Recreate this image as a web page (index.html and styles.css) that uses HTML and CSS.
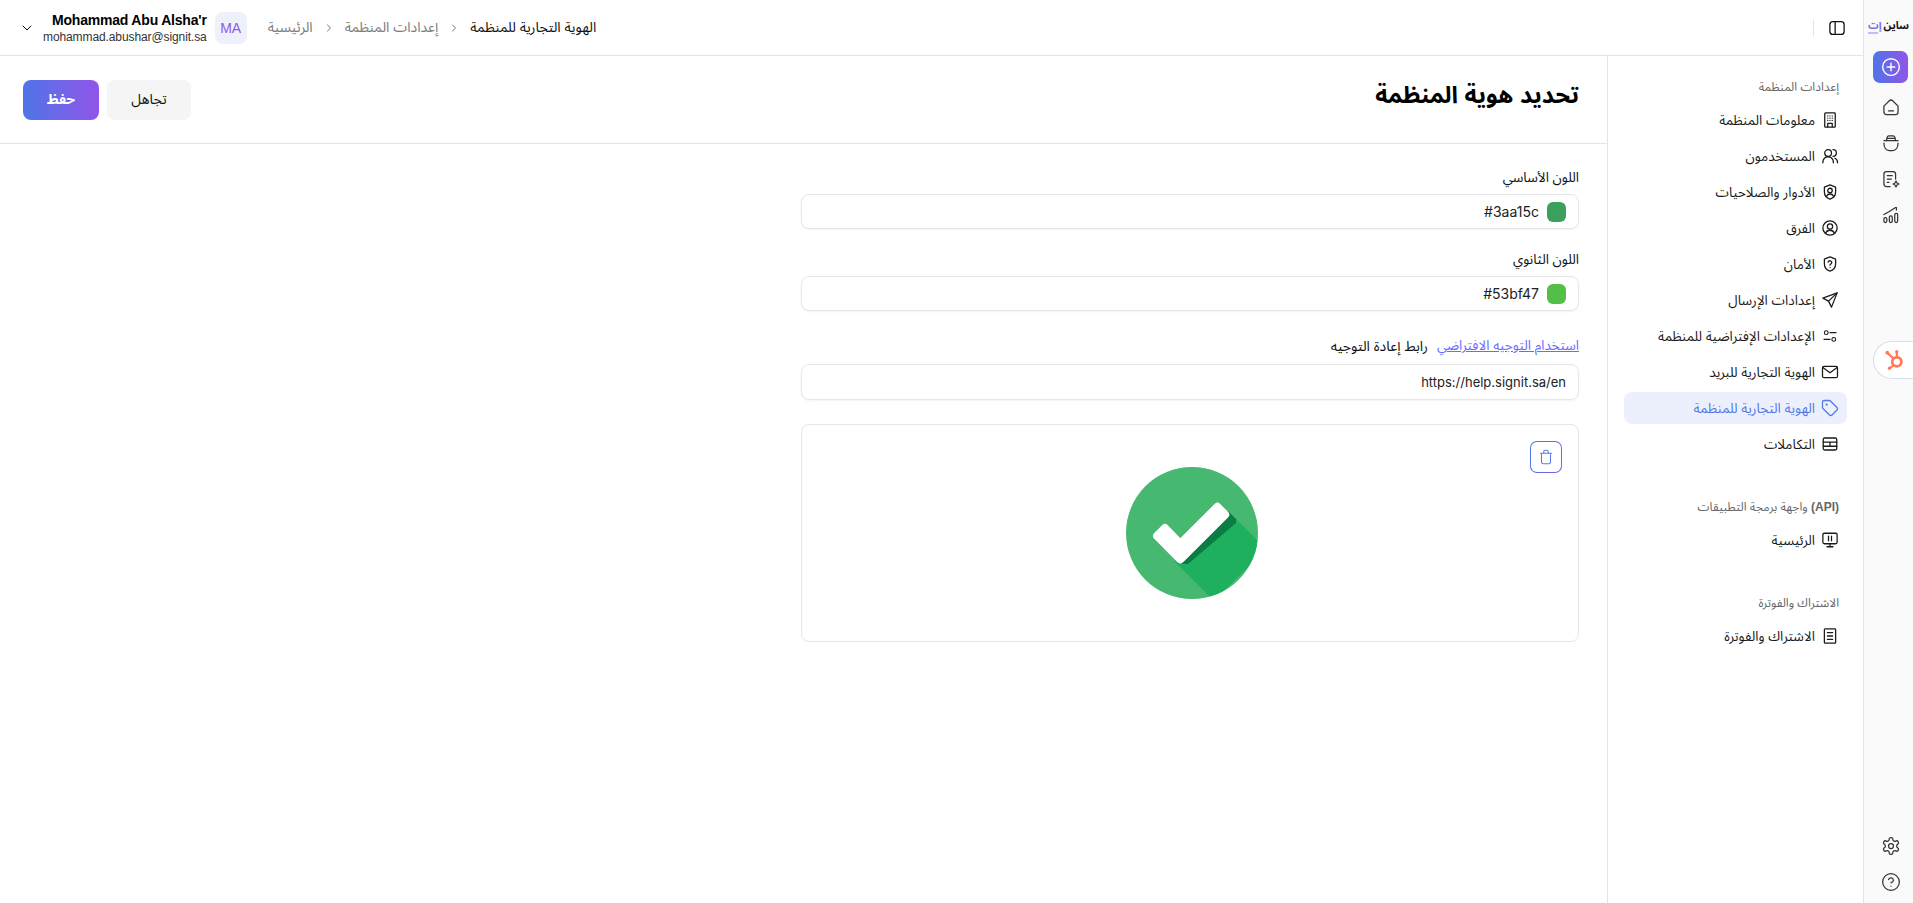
FILE: index.html
```html
<!DOCTYPE html>
<html lang="ar" dir="rtl">
<head>
    <meta charset="UTF-8">
    <meta name="viewport" content="width=device-width, initial-scale=1.0">
    <title>تحديد هوية المنظمة</title>
    <link rel="stylesheet" href="styles.css">
</head>
<body>

    <!-- الشريط الجانبي الضيق -->
    <aside class="rail">
        <div class="logo"><span>ساين</span> <span class="logo-accent">إت</span></div>
        <button class="rail-add">
            <svg class="icon icon-add" viewBox="0 0 24 24"><circle cx="12" cy="12" r="10"/><path d="M12 7.5v9M7.5 12h9"/></svg>
        </button>
        <nav class="rail-links">
            <a class="rail-link"><svg class="icon" viewBox="0 0 24 24"><path d="M3.5 11 10 4.500a3 3 0 0 1 4 0l6.500 6.500v7a3 3 0 0 1-3 3h-11a3 3 0 0 1-3-3z"/><path d="M9 16.500h6"/></svg></a>
            <a class="rail-link"><svg class="icon" viewBox="0 0 24 24"><path d="M6.500 9l1-4A2 2 0 0 1 9.500 3.500h5a2 2 0 0 1 2 1.500l1 4"/><path d="M3.500 9h17"/><path d="M3.500 12c0 5 2.500 9 6.500 9h4c4 0 6.500-4 6.500-9"/><path d="M7.500 6.500h9"/></svg></a>
            <a class="rail-link"><svg class="icon" viewBox="0 0 24 24"><path d="M11 21H6.500a3 3 0 0 1-3-3V6a3 3 0 0 1 3-3h8a3 3 0 0 1 3 3v6"/><path d="M7.500 8h6M7.500 12h5M7.500 16h2"/><path d="M18 14.500l1.200 2.300 2.300 1.200-2.300 1.200-1.200 2.300-1.200-2.300-2.300-1.200 2.300-1.200z"/></svg></a>
            <a class="rail-link"><svg class="icon" viewBox="0 0 24 24"><rect x="3.500" y="15" width="3.500" height="6" rx="1.700"/><rect x="10" y="13" width="3.500" height="8" rx="1.700"/><rect x="16.500" y="10" width="3.500" height="11" rx="1.700"/><path d="M3.500 11.500l6-3.500 8-5"/><path d="M18.500 3v3"/></svg></a>
        </nav>
        <div class="rail-bottom">
            <a class="rail-link"><svg class="icon" viewBox="0 0 24 24"><path d="M12.22 2h-.44a2 2 0 0 0-2 2v.18a2 2 0 0 1-1 1.73l-.43.25a2 2 0 0 1-2 0l-.15-.08a2 2 0 0 0-2.73.73l-.22.38a2 2 0 0 0 .73 2.73l.15.1a2 2 0 0 1 1 1.72v.51a2 2 0 0 1-1 1.74l-.15.09a2 2 0 0 0-.73 2.73l.22.38a2 2 0 0 0 2.73.73l.15-.08a2 2 0 0 1 2 0l.43.25a2 2 0 0 1 1 1.73V20a2 2 0 0 0 2 2h.44a2 2 0 0 0 2-2v-.18a2 2 0 0 1 1-1.73l.43-.25a2 2 0 0 1 2 0l.15.08a2 2 0 0 0 2.73-.73l.22-.39a2 2 0 0 0-.73-2.73l-.15-.08a2 2 0 0 1-1-1.74v-.5a2 2 0 0 1 1-1.74l.15-.09a2 2 0 0 0 .73-2.73l-.22-.38a2 2 0 0 0-2.73-.73l-.15.08a2 2 0 0 1-2 0l-.43-.25a2 2 0 0 1-1-1.73V4a2 2 0 0 0-2-2z"/><circle cx="12" cy="12" r="3"/></svg></a>
            <a class="rail-link"><svg class="icon" viewBox="0 0 24 24"><circle cx="12" cy="12" r="10"/><path d="M9.100 9a3 3 0 0 1 5.800 1c0 2-3 3-3 3"/><path d="M12 17h.01"/></svg></a>
        </div>
    </aside>

    <div class="page">

        <header class="topbar">
            <div class="user-menu">
                <svg class="icon icon-small" viewBox="0 0 24 24"><path d="M6 9l6 6 6-6"/></svg>
                <div class="user-info">
                    <div class="user-name">Mohammad Abu Alsha'r</div>
                    <div class="user-email">mohammad.abushar@signit.sa</div>
                </div>
                <div class="avatar">MA</div>
            </div>
            <div class="crumbs">
                <a class="crumb">الرئيسية</a>
                <svg class="icon crumb-sep" viewBox="0 0 24 24"><path d="M9 6l6 6-6 6"/></svg>
                <a class="crumb">إعدادات المنظمة</a>
                <svg class="icon crumb-sep" viewBox="0 0 24 24"><path d="M9 6l6 6-6 6"/></svg>
                <span class="crumb crumb-current">الهوية التجارية للمنظمة</span>
            </div>
            <div class="topbar-end">
                <span class="topbar-divider"></span>
                <svg class="icon" viewBox="0 0 24 24"><rect x="2.500" y="3.500" width="19" height="17" rx="4"/><path d="M9.500 3.500v17"/></svg>
            </div>
        </header>

        <div class="content">

            <aside class="sidebar">
                <section class="side-group">
                    <h4 class="side-title">إعدادات المنظمة</h4>
                    <a class="side-item"><svg class="icon" viewBox="0 0 24 24"><rect x="5" y="2.500" width="14" height="19" rx="1"/><path d="M9 6.500h.01M12 6.500h.01M15 6.500h.01M9 9.500h.01M12 9.500h.01M15 9.500h.01M9 12.500h.01M12 12.500h.01M15 12.500h.01M9 21v-4.500h6V21"/></svg>معلومات المنظمة</a>
                    <a class="side-item"><svg class="icon" viewBox="0 0 24 24"><circle cx="9.500" cy="8" r="4.500"/><path d="M2.500 21v-1a7 7 0 0 1 14 0v1"/><path d="M16 3.500a4.500 4.500 0 0 1 0 9"/><path d="M18.500 15a5.500 5.500 0 0 1 3.500 5v1"/></svg>المستخدمون</a>
                    <a class="side-item"><svg class="icon" viewBox="0 0 24 24"><path d="M12 2.500l7.500 3v6c0 5-3 8.500-7.500 10-4.500-1.500-7.500-5-7.500-10v-6z"/><circle cx="12" cy="10" r="3"/><path d="M7.500 17.500a5 5 0 0 1 9 0"/></svg>الأدوار والصلاحيات</a>
                    <a class="side-item"><svg class="icon" viewBox="0 0 24 24"><circle cx="12" cy="12" r="9.500"/><circle cx="12" cy="10" r="3.500"/><path d="M6 19a6.500 6.500 0 0 1 12 0"/></svg>الفرق</a>
                    <a class="side-item"><svg class="icon" viewBox="0 0 24 24"><path d="M12 2.500l7.500 3v6c0 5-3 8.500-7.500 10-4.500-1.500-7.500-5-7.500-10v-6z"/><path d="M9.500 9.500a2.500 2.500 0 0 1 4.900.6c0 1.600-2.400 2.200-2.400 3.400"/><path d="M12 16.800h.01"/></svg>الأمان</a>
                    <a class="side-item"><svg class="icon" viewBox="0 0 24 24"><path d="M21.500 2.500L2.500 9.500l7.500 4 4 8z"/><path d="M10 13.500l11.500-11"/></svg>إعدادات الإرسال</a>
                    <a class="side-item"><svg class="icon icon-thin" viewBox="0 0 24 24"><circle cx="7" cy="7.500" r="2.500"/><path d="M12 7.500h8"/><circle cx="17" cy="16.500" r="2.500"/><path d="M4 16.500h8"/></svg>الإعدادات الإفتراضية للمنظمة</a>
                    <a class="side-item"><svg class="icon" viewBox="0 0 24 24"><rect x="2" y="4.500" width="20" height="15" rx="2"/><path d="M2.500 6l9.500 7 9.500-7"/></svg>الهوية التجارية للبريد</a>
                    <a class="side-item side-item-active"><svg class="icon" viewBox="0 0 24 24"><path d="M12.600 2.600A2 2 0 0 0 11.200 2H4a2 2 0 0 0-2 2v7.200a2 2 0 0 0 .6 1.400l8.700 8.700a2.400 2.400 0 0 0 3.400 0l6.600-6.600a2.400 2.400 0 0 0 0-3.400z"/><circle cx="7.500" cy="7.500" r=".6"/></svg>الهوية التجارية للمنظمة</a>
                    <a class="side-item"><svg class="icon" viewBox="0 0 24 24"><rect x="3" y="4" width="18" height="16" rx="2"/><path d="M3 9.500h18M3 15h18M12 9.500V15"/></svg>التكاملات</a>
                </section>
                <section class="side-group">
                    <h4 class="side-title"><span class="api-tag" dir="ltr">(API)</span> واجهة برمجة التطبيقات</h4>
                    <a class="side-item"><svg class="icon" viewBox="0 0 24 24"><rect x="2.500" y="3" width="19" height="14" rx="2"/><path d="M12 17v4M8 21h8M10 7v6M14 7v6"/></svg>الرئيسية</a>
                </section>
                <section class="side-group">
                    <h4 class="side-title">الاشتراك والفوترة</h4>
                    <a class="side-item"><svg class="icon" viewBox="0 0 24 24"><rect x="4.500" y="2.500" width="15" height="19" rx="1"/><path d="M8.500 7.500h7M8.500 12h7M8.500 16.500h7"/></svg>الاشتراك والفوترة</a>
                </section>
            </aside>

            <main class="main">
                <div class="page-head">
                    <h1 class="page-title">تحديد هوية المنظمة</h1>
                    <div class="page-actions">
                        <button class="btn btn-light">تجاهل</button>
                        <button class="btn btn-primary">حفظ</button>
                    </div>
                </div>

                <form class="brand-form">
                    <div class="field">
                        <label class="field-label">اللون الأساسي</label>
                        <div class="input input-hex">
                            <span class="swatch swatch-primary"></span>
                            <span dir="ltr">#3aa15c</span>
                        </div>
                    </div>
                    <div class="field">
                        <label class="field-label">اللون الثانوي</label>
                        <div class="input input-hex">
                            <span class="swatch swatch-secondary"></span>
                            <span dir="ltr">#53bf47</span>
                        </div>
                    </div>
                    <div class="field field-url">
                        <div class="field-label-row">
                            <a class="link">استخدام التوجيه الافتراضي</a>
                            <label class="field-label">رابط إعادة التوجيه</label>
                        </div>
                        <div class="input input-url"><span dir="ltr">https://help.signit.sa/en</span></div>
                    </div>

                    <div class="logo-card">
                        <button type="button" class="delete-btn">
                            <svg class="icon icon-trash" viewBox="0 0 24 24"><path d="M6 8v10.500A2.500 2.500 0 0 0 8.500 21h7a2.500 2.500 0 0 0 2.500-2.500V8"/><path d="M4.500 7h15"/><path d="M9 7V5a2 2 0 0 1 2-2h2a2 2 0 0 1 2 2v2"/></svg>
                        </button>
                        <svg class="logo-image" viewBox="0 0 132 132">
                            <defs><clipPath id="discClip"><circle cx="66" cy="66" r="66"/></clipPath></defs>
                            <circle cx="66" cy="66" r="66" fill="#46b86f"/>
                            <polygon clip-path="url(#discClip)" points="48,94 88,134 140,82 102,44" fill="#1fb05f"/>
                            <polygon points="102,44 110,52 110,56 62,97 52,97" fill="#0a7d44"/>
                            <polygon points="31.100,68.900 38.900,61.100 54.300,76.900 91.400,39.800 99.200,47.600 54.300,92.500" fill="#fff" stroke="#fff" stroke-width="8" stroke-linejoin="round"/>
                        </svg>
                    </div>
                </form>
            </main>
        </div>
    </div>

    <!-- زر الدعم العائم -->
    <a class="hubspot-tab">
        <svg viewBox="0 0 24 24" width="22" height="22"><circle cx="14" cy="14" r="5" fill="none" stroke="#ff7a59" stroke-width="3"/><path d="M14 9V3M10.500 10.500L4 4.500M10.500 17.500l-4 3.500" stroke="#ff7a59" stroke-width="2.400" fill="none"/><circle cx="14" cy="3" r="1.800" fill="#ff7a59"/><circle cx="3.500" cy="4" r="2" fill="#ff7a59"/><circle cx="6" cy="21" r="1.800" fill="#ff7a59"/></svg>
    </a>

</body>
</html>
```

FILE: styles.css
```css
* {
    box-sizing: border-box;
}

body {
    margin: 0;
    height: 100vh;
    overflow: hidden;
    display: flex;
    background-color: #fff;
    color: #111;
    font-family: "Liberation Sans", "Noto Sans Arabic", "DejaVu Sans", sans-serif;
    font-size: 14px;
}

.icon {
    width: 18px;
    height: 18px;
    flex-shrink: 0;
    fill: none;
    stroke: currentColor;
    stroke-width: 1.7;
    stroke-linecap: round;
    stroke-linejoin: round;
}

.icon-thin {
    stroke-width: 1.5;
}

.icon-small {
    width: 16px;
    height: 16px;
    stroke-width: 1.5;
}

.icon-trash {
    stroke-width: 1.4;
}

/* rail */
.rail {
    width: 50px;
    flex-shrink: 0;
    display: flex;
    flex-direction: column;
    align-items: center;
    padding: 18px 0 3px 4px;
    background-color: #fafafa;
    border-left: 1px solid #e4e4e4;
}

.logo {
    position: relative;
    margin-right: 4px;
    font-size: 10.5px;
    font-weight: bold;
    line-height: 14px;
    word-spacing: -1px;
    white-space: nowrap;
    color: #111;
}

.logo-accent {
    color: #7a6cf0;
}

.logo-accent::after {
    content: "";
    position: absolute;
    left: 0;
    bottom: -2px;
    width: 10px;
    height: 2px;
    background-color: #c3bdf6;
}

.rail-add {
    width: 35px;
    height: 32px;
    margin: 19px 0 6px;
    padding: 0;
    border: none;
    border-radius: 7px;
    color: #fff;
    background: linear-gradient(90deg, #4f75e8, #9155e8);
    display: flex;
    align-items: center;
    justify-content: center;
}

.rail-add .icon {
    width: 20px;
    height: 20px;
}

.rail-links {
    display: flex;
    flex-direction: column;
}

.rail-link {
    width: 36px;
    height: 36px;
    display: flex;
    align-items: center;
    justify-content: center;
    color: #333;
}

.rail-link .icon {
    width: 20px;
    height: 20px;
    stroke-width: 1.5;
}

.rail-bottom {
    margin-top: auto;
    display: flex;
    flex-direction: column;
}

/* top bar */
.page {
    flex: 1;
    min-width: 0;
    display: flex;
    flex-direction: column;
}

.topbar {
    direction: ltr;
    height: 56px;
    flex-shrink: 0;
    display: flex;
    align-items: center;
    padding: 0 17px 0 19px;
    border-bottom: 1px solid #e4e4e4;
}

.user-menu {
    display: flex;
    align-items: center;
}

.user-info {
    margin-left: 8px;
    text-align: right;
}

.user-name {
    font-size: 14px;
    font-weight: bold;
    line-height: 18px;
    letter-spacing: -0.2px;
    color: #000;
}

.user-email {
    font-size: 12px;
    line-height: 16px;
    letter-spacing: -0.1px;
    color: #333;
}

.avatar {
    width: 32px;
    height: 32px;
    margin-left: 8px;
    border-radius: 8px;
    background-color: #eef0fc;
    color: #8a5ae6;
    font-size: 14px;
    display: flex;
    align-items: center;
    justify-content: center;
}

.crumbs {
    display: flex;
    align-items: center;
    gap: 10px;
    margin-left: 21px;
}

.crumb {
    color: #7b7b7b;
    font-size: 14px;
    direction: rtl;
}

.crumb-current {
    color: #111;
}

.crumb-sep {
    width: 12px;
    height: 12px;
    color: #555;
}

.topbar-end {
    margin-left: auto;
    display: flex;
    align-items: center;
    gap: 14px;
}

.topbar-divider {
    width: 1px;
    height: 16px;
    background-color: #e4e4e4;
}

/* settings sidebar */
.content {
    flex: 1;
    min-height: 0;
    display: flex;
}

.sidebar {
    width: 256px;
    flex-shrink: 0;
    padding: 21px 16px 0;
    border-left: 1px solid #e4e4e4;
}

.side-group {
    display: flex;
    flex-direction: column;
    gap: 4px;
    margin-bottom: 37px;
}

.side-title {
    margin: 0 8px 3px;
    font-size: 12px;
    font-weight: normal;
    line-height: 20px;
    color: #666;
}

.api-tag {
    font-weight: bold;
}

.side-item {
    height: 32px;
    display: flex;
    align-items: center;
    gap: 6px;
    padding: 0 8px;
    border-radius: 8px;
    font-size: 13.5px;
    color: #1a1a1a;
}

.side-item-active {
    background-color: #ecf0fd;
    color: #5577e8;
}

/* main */
.main {
    flex: 1;
    min-width: 0;
}

.page-head {
    height: 88px;
    display: flex;
    align-items: center;
    justify-content: space-between;
    padding: 0 28px 0 23px;
    border-bottom: 1px solid #e4e4e4;
}

.page-title {
    margin: 0 0 8px;
    font-size: 23.5px;
    font-weight: bold;
    color: #000;
}

.page-actions {
    display: flex;
    gap: 8px;
}

.btn {
    height: 40px;
    border: none;
    border-radius: 8px;
    font-family: inherit;
    font-size: 14px;
}

.btn-light {
    width: 84px;
    background-color: #f5f5f5;
    color: #111;
}

.btn-primary {
    width: 76px;
    font-weight: bold;
    color: #fff;
    background: linear-gradient(90deg, #4f75e8, #9155e8);
}

.brand-form {
    width: 806px;
    padding: 24px 28px 0 0;
}

.field {
    margin-bottom: 21px;
}

.field-label {
    display: block;
    margin-bottom: 6px;
    font-size: 13.5px;
    line-height: 20px;
    color: #111;
}

.field-label-row {
    display: flex;
    gap: 9px;
    margin-bottom: 8px;
}

.field-label-row .field-label {
    margin-bottom: 0;
    font-size: 14px;
}

.link {
    font-size: 13.5px;
    line-height: 20px;
    color: #6b6bff;
    text-decoration: underline;
}

.input {
    height: 35px;
    display: flex;
    align-items: center;
    gap: 8px;
    padding: 0 12px;
    border: 1px solid #e6e6e6;
    border-radius: 8px;
    box-shadow: 0 1px 2px rgba(0, 0, 0, 0.05);
    font-family: Inter, "Liberation Sans", sans-serif;
    font-size: 13px;
    color: #222;
}

.input-hex {
    font-size: 14px;
}

.input-url {
    height: 36px;
}

.field-url {
    margin-top: 25px;
    margin-bottom: 24px;
}

.swatch {
    width: 19px;
    height: 20px;
    border-radius: 6px;
}

.swatch-primary {
    background-color: #3aa15c;
}

.swatch-secondary {
    background-color: #53bf47;
}

.logo-card {
    position: relative;
    height: 218px;
    display: flex;
    align-items: center;
    justify-content: center;
    padding-left: 3px;
    border: 1px solid #e6e6e6;
    border-radius: 8px;
}

.logo-image {
    width: 132px;
    height: 132px;
}

.delete-btn {
    position: absolute;
    top: 16px;
    right: 16px;
    width: 32px;
    height: 32px;
    padding: 0;
    display: flex;
    align-items: center;
    justify-content: center;
    border: 1px solid transparent;
    border-radius: 7px;
    color: #5b7cf0;
    background: linear-gradient(#fff, #fff) padding-box, linear-gradient(90deg, #4f75e8, #9155e8) border-box;
}

.hubspot-tab {
    position: fixed;
    top: 341px;
    right: 0;
    width: 40px;
    height: 38px;
    display: flex;
    align-items: center;
    padding-left: 10px;
    direction: ltr;
    border: 1px solid #d5dfe9;
    border-right: none;
    border-radius: 19px 0 0 19px;
    background-color: #fff;
}
```
